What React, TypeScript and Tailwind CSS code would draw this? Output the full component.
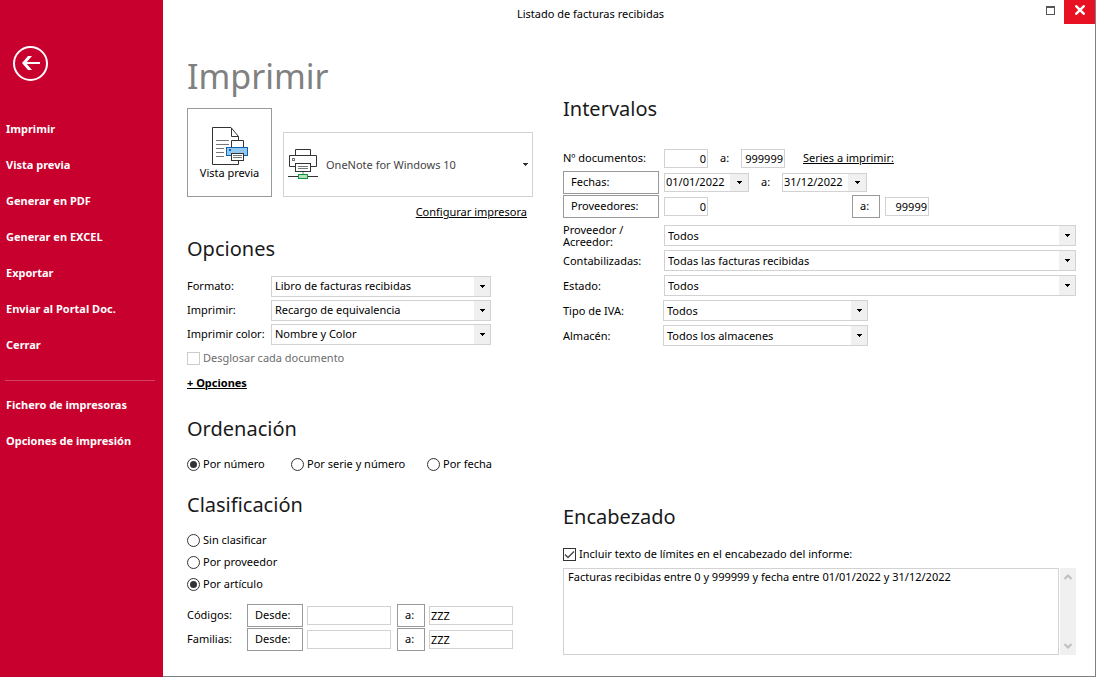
import React, { useState } from 'react';

const menuItems = [
  'Imprimir',
  'Vista previa',
  'Generar en PDF',
  'Generar en EXCEL',
  'Exportar',
  'Enviar al Portal Doc.',
  'Cerrar',
];

const configItems = ['Fichero de impresoras', 'Opciones de impresión'];

const ordenOptions = ['Por número', 'Por serie y número', 'Por fecha'];
const clasificacionOptions = ['Sin clasificar', 'Por proveedor', 'Por artículo'];

const Arrow: React.FC = () => (
  <svg width="5" height="3" viewBox="0 0 5 3" shapeRendering="crispEdges">
    <path d="M0 0h5v1h-1v1h-1v1h-1v-1h-1v-1h-1z" fill="currentColor" />
  </svg>
);

const PreviewIcon: React.FC = () => (
  <svg width="36" height="38" viewBox="0 0 36 38" fill="none">
    <path d="M26.5 14V9.5L19 .5H.5v37h26V33" fill="#fff" stroke="#333" />
    <path d="M19.5 1v8.5h7" stroke="#333" />
    <path d="M4 13.5h13M4 17.5h13M4 21.5h8M4 25.5h8M4 29.5h8" stroke="#777" />
    <path d="M19.5 20.5v-7h12v7" fill="#fff" stroke="#333" />
    <rect x="14.5" y="20.5" width="21" height="8" fill="#92c8f0" stroke="#0f62ae" />
    <rect x="17" y="22" width="2" height="2" fill="#0f62ae" />
    <rect x="19.5" y="26.5" width="12" height="7" fill="#fff" stroke="#333" />
    <path d="M21 28.5h9M21 30.5h9" stroke="#777" />
  </svg>
);

const PrinterIcon: React.FC = () => (
  <svg width="30" height="31" viewBox="0 0 30 31" fill="none">
    <path d="M7.5 6.5v-6h15v6" stroke="#333" />
    <path d="M7.5 17.5h-6v-11h27v11h-6" stroke="#333" />
    <rect x="4.5" y="9.5" width="2" height="2" stroke="#777" />
    <rect x="7.5" y="14.5" width="15" height="8" fill="#fff" stroke="#333" />
    <path d="M10 17.5h10M10 19.5h10" stroke="#777" />
    <path d="M15 23v2" stroke="#bbb" strokeWidth="2" />
    <path d="M0 27.5h30" stroke="#333" />
    <rect x="10.5" y="25.5" width="9" height="4" fill="#b5dfbd" stroke="#10963c" />
  </svg>
);

const Heading: React.FC<{ children: React.ReactNode }> = ({ children }) => (
  <h2 className="text-[20px] leading-7 text-[#1a1a1a]">{children}</h2>
);

const Select: React.FC<{ id: string; value: string; className: string }> = ({ id, value, className }) => (
  <div className={`grid h-[21px] border border-[#d2d2d2] ${className}`}>
    <select id={id} className="col-start-1 row-start-1 w-full appearance-none bg-white pl-[3px] pr-5 outline-none">
      <option>{value}</option>
    </select>
    <span className="pointer-events-none col-start-1 row-start-1 flex w-4 items-center justify-center justify-self-end bg-[#f0f0f0]">
      <Arrow />
    </span>
  </div>
);

const SelectRow: React.FC<{ id: string; label: string; value: string }> = ({ id, label, value }) => (
  <div className="flex h-6 items-center">
    <label htmlFor={id} className="w-21 whitespace-nowrap">{label}</label>
    <Select id={id} value={value} className="w-[220px]" />
  </div>
);

const FilterRow: React.FC<{ id: string; label: string; value: string; short?: boolean }> = ({ id, label, value, short }) => (
  <div className="flex h-[25px] items-center">
    <label htmlFor={id} className="mr-1 w-24 shrink-0 leading-3">{label}</label>
    <Select id={id} value={value} className={short ? 'w-[205px]' : 'ml-px flex-1'} />
  </div>
);

const Field: React.FC<{ label: string; value: string; className: string }> = ({ label, value, className }) => (
  <input
    type="text"
    aria-label={label}
    defaultValue={value}
    className={`h-[19px] border border-[#d2d2d2] bg-white outline-none ${className}`}
  />
);

const DateField: React.FC<{ label: string; value: string }> = ({ label, value }) => (
  <div className="flex h-[19px] w-[85px] border border-[#d2d2d2]">
    <input type="text" aria-label={label} defaultValue={value} className="w-[65px] pl-px outline-none" />
    <button type="button" aria-label={`Abrir calendario ${label}`} className="flex flex-1 items-center justify-center bg-[#f0f0f0]">
      <Arrow />
    </button>
  </div>
);

const BoxButton: React.FC<{ children: React.ReactNode; className: string }> = ({ children, className }) => (
  <button type="button" className={`h-[23px] border border-[#999] bg-white pl-[7px] text-left ${className}`}>
    {children}
  </button>
);

const Radio: React.FC<{ name: string; label: string; checked: boolean; onChange: () => void; className?: string }> = ({
  name,
  label,
  checked,
  onChange,
  className = '',
}) => (
  <label className={`flex items-center gap-[3px] ${className}`}>
    <input
      type="radio"
      name={name}
      checked={checked}
      onChange={onChange}
      className="grid h-[13px] w-[13px] appearance-none place-items-center rounded-full border border-[#333] before:h-[7px] before:w-[7px] before:rounded-full checked:before:bg-[#333]"
    />
    {label}
  </label>
);

const RangeRow: React.FC<{ label: string }> = ({ label }) => (
  <div className="flex h-6 items-center">
    <span className="w-15">{label}</span>
    <BoxButton className="w-14">Desde:</BoxButton>
    <Field label={`${label} desde`} value="" className="ml-1 w-21 pl-px" />
    <BoxButton className="ml-[6px] w-7">a:</BoxButton>
    <Field label={`${label} hasta`} value="ZZZ" className="ml-1 w-21 pl-px" />
  </div>
);

const App: React.FC = () => {
  const [orden, setOrden] = useState('Por número');
  const [clasificacion, setClasificacion] = useState('Por artículo');
  const [incluirTexto, setIncluirTexto] = useState(true);

  return (
    <div className="flex min-h-screen bg-white font-['Noto_Sans','Open_Sans',sans-serif] text-[11px] leading-4 text-black">
      {/* Sidebar */}
      <nav className="w-[163px] shrink-0 bg-[#c8002d] font-bold text-white">
        <button type="button" aria-label="Volver" className="mt-[46px] ml-[13px] block">
          <svg width="35" height="35" viewBox="0 0 35 35" fill="none" stroke="#fff">
            <circle cx="17.5" cy="17.5" r="16.5" strokeWidth="2" />
            <path d="M27 17H11" strokeWidth="2" />
            <path d="M9 17l6-7h4l-6 7 6 7h-4z" fill="#fff" stroke="none" />
          </svg>
        </button>
        <ul className="mt-[30px]">
          {menuItems.map((item) => (
            <li key={item} className="flex h-9 items-center pl-[6px]">
              <button type="button">{item}</button>
            </li>
          ))}
        </ul>
        <hr className="mt-[17px] mr-2 mb-[6px] ml-[5px] border-[#d74061]" />
        <ul>
          {configItems.map((item) => (
            <li key={item} className="flex h-9 items-center pl-[6px]">
              <button type="button">{item}</button>
            </li>
          ))}
        </ul>
      </nav>

      <div className="flex min-w-0 flex-1 flex-col border-r border-b border-[#808080]">
        {/* Title bar */}
        <header className="flex h-6 items-start">
          <span className="flex-1 pt-[6px] text-center">Listado de facturas recibidas</span>
          <div className="flex w-[77px] justify-end">
            <button type="button" aria-label="Maximizar" className="mr-[9px] flex h-5 w-[9px] items-center">
              <span className="h-[9px] w-[9px] border border-t-2 border-[#555]" />
            </button>
            <button type="button" aria-label="Cerrar ventana" className="flex h-6 w-[31px] justify-center bg-[#e81123] pt-[5px]">
              <svg width="10" height="10" viewBox="0 0 10 10" stroke="#fff" strokeWidth="2.4">
                <path d="M.5 .5l9 9M9.5 .5l-9 9" />
              </svg>
            </button>
          </div>
        </header>

        <main className="flex flex-1 gap-[30px] pr-[19px] pb-[21px] pl-6">
          <div className="w-[346px] shrink-0">
            <h1 className="mt-7 text-[34px] leading-12 text-[#808080]">Imprimir</h1>

            <div className="mt-2 flex items-end justify-between">
              <button type="button" className="flex h-[89px] w-[85px] flex-col items-center justify-center border border-[#999] pt-[2px]">
                <PreviewIcon />
                Vista previa
              </button>
              <div className="grid h-[65px] w-[250px] border border-[#d2d2d2]">
                <select aria-label="Impresora" className="col-start-1 row-start-1 w-full appearance-none bg-white pl-[42px] text-[#444] outline-none">
                  <option>OneNote for Windows 10</option>
                </select>
                <span className="pointer-events-none col-start-1 row-start-1 flex items-center justify-between pr-1 pl-1 text-[#333]">
                  <PrinterIcon />
                  <Arrow />
                </span>
              </div>
            </div>
            <div className="mt-[7px] pr-[6px] text-right">
              <a href="#configurar" className="underline">Configurar impresora</a>
            </div>

            <section className="mt-[15px]">
              <Heading>Opciones</Heading>
              <div className="mt-[11px]">
                <SelectRow id="formato" label="Formato:" value="Libro de facturas recibidas" />
                <SelectRow id="imprimir" label="Imprimir:" value="Recargo de equivalencia" />
                <SelectRow id="color" label="Imprimir color:" value="Nombre y Color" />
              </div>
              <label className="flex h-6 items-center gap-[3px] text-[#6d6d6d]">
                <input type="checkbox" disabled className="h-[13px] w-[13px] appearance-none border border-[#ccc]" />
                Desglosar cada documento
              </label>
              <a href="#opciones" className="flex h-6 items-center pt-px font-bold underline">+ Opciones</a>
            </section>

            <section className="mt-[21px]">
              <Heading>Ordenación</Heading>
              <div className="mt-[13px] flex">
                {ordenOptions.map((option, i) => (
                  <Radio
                    key={option}
                    name="orden"
                    label={option}
                    checked={orden === option}
                    onChange={() => setOrden(option)}
                    className={i === 0 ? 'w-26' : i === 1 ? 'w-34' : ''}
                  />
                ))}
              </div>
            </section>

            <section className="mt-[19px]">
              <Heading>Clasificación</Heading>
              <div className="mt-[10px]">
                {clasificacionOptions.map((option) => (
                  <Radio
                    key={option}
                    name="clasificacion"
                    label={option}
                    checked={clasificacion === option}
                    onChange={() => setClasificacion(option)}
                    className="h-[22px]"
                  />
                ))}
              </div>
              <div className="mt-2">
                <RangeRow label="Códigos:" />
                <RangeRow label="Familias:" />
              </div>
            </section>
          </div>

          <div className="flex min-w-0 flex-1 flex-col justify-between">
            <section className="mt-[71px]">
              <Heading>Intervalos</Heading>
              <div className="mt-[23px]">
                <div className="flex h-6 items-center">
                  <span className="w-[101px]">Nº documentos:</span>
                  <Field label="Documento desde" value="0" className="w-11 pr-px text-right" />
                  <span className="w-[33px] pl-3">a:</span>
                  <Field label="Documento hasta" value="999999" className="w-11 pr-px text-right" />
                  <a href="#series" className="ml-[18px] underline">Series a imprimir:</a>
                </div>
                <div className="flex h-6 items-center">
                  <BoxButton className="mr-[5px] w-24">Fechas:</BoxButton>
                  <DateField label="Fecha desde" value="01/01/2022" />
                  <span className="w-[33px] pl-3">a:</span>
                  <DateField label="Fecha hasta" value="31/12/2022" />
                </div>
                <div className="flex h-6 items-center">
                  <BoxButton className="mr-[5px] w-24">Proveedores:</BoxButton>
                  <Field label="Proveedor desde" value="0" className="w-11 pr-px text-right" />
                  <BoxButton className="ml-36 w-7">a:</BoxButton>
                  <Field label="Proveedor hasta" value="99999" className="ml-[5px] w-11 pr-px text-right" />
                </div>
              </div>
              <div className="mt-[5px]">
                <FilterRow id="acreedor" label="Proveedor / Acreedor:" value="Todos" />
                <FilterRow id="contabilizadas" label="Contabilizadas:" value="Todas las facturas recibidas" />
                <FilterRow id="estado" label="Estado:" value="Todos" />
                <FilterRow id="iva" label="Tipo de IVA:" value="Todos" short />
                <FilterRow id="almacen" label="Almacén:" value="Todos los almacenes" short />
              </div>
            </section>

            <section>
              <Heading>Encabezado</Heading>
              <label className="mt-[15px] flex items-center gap-[3px]">
                <span className="grid">
                  <input
                    type="checkbox"
                    checked={incluirTexto}
                    onChange={(e) => setIncluirTexto(e.target.checked)}
                    className="peer col-start-1 row-start-1 h-[13px] w-[13px] appearance-none border border-[#333]"
                  />
                  <svg className="pointer-events-none invisible col-start-1 row-start-1 peer-checked:visible" width="13" height="13" viewBox="0 0 13 13" fill="none">
                    <path d="M2 6.5l3 3L11 3.5" stroke="#444" strokeWidth="1.3" />
                  </svg>
                </span>
                Incluir texto de límites en el encabezado del informe:
              </label>
              <div className="mt-[6px] flex h-[87px] gap-px">
                <textarea
                  aria-label="Texto del encabezado"
                  defaultValue="Facturas recibidas entre 0 y 999999 y fecha entre 01/01/2022 y 31/12/2022"
                  className="min-w-0 flex-1 resize-none border border-[#d2d2d2] px-1 outline-none"
                />
                <div className="flex w-4 flex-col items-center justify-between bg-[#f0f0f0] py-[6px]">
                  <svg width="8" height="6" viewBox="0 0 8 6" fill="none" stroke="#bfbfbf" strokeWidth="2">
                    <path d="M.5 5L4 1.5 7.5 5" />
                  </svg>
                  <svg width="8" height="6" viewBox="0 0 8 6" fill="none" stroke="#bfbfbf" strokeWidth="2">
                    <path d="M.5 1L4 4.500 7.5 1" />
                  </svg>
                </div>
              </div>
            </section>
          </div>
        </main>
      </div>
    </div>
  );
};

export default App;
